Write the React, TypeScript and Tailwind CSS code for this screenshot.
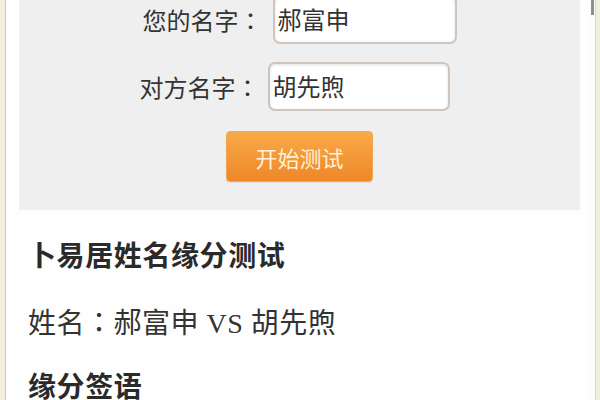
import React from "react";

const cjk = { fontFamily: '"Noto Sans CJK SC", "Noto Sans", sans-serif' };
const colon = { fontFamily: '"Noto Sans CJK JP", "Noto Sans CJK SC", sans-serif' };

export default function App() {
  return (
    <div
      className="w-[600px] h-[400px] overflow-hidden flex bg-[#f4f1e3] text-[#333333]"
      style={cjk}
    >
      <div className="w-[5px] shrink-0 bg-[#f3efdf]" />
      <div className="flex-1 flex flex-col bg-[#fefefe] border-l border-[#cfcabb] pl-[13px] pr-[10px]">
        <div className="mt-[-5px] bg-[#efefef] flex flex-col items-center pb-[28px]">
          <div className="flex items-center">
            <span className="text-[24px] leading-[30px] w-[120px] text-right">
              您的名字<span style={colon}>：</span>
            </span>
            <div className="ml-[10px] w-[184px] h-[49px] bg-white border-2 border-[#cfc5bd] rounded-[7px] shadow-[inset_0_1px_3px_rgba(0,0,0,0.12)] flex items-center pl-[3px] pb-[2px]">
              <span className="text-[24px] leading-[30px] text-[#333]">郝富申</span>
            </div>
          </div>
          <div className="flex items-center mt-[18px] pr-[10px]">
            <span className="text-[24px] leading-[30px] w-[120px] text-right">
              对方名字<span style={colon}>：</span>
            </span>
            <div className="ml-[8px] w-[182px] h-[49px] bg-white border-2 border-[#cfc5bd] rounded-[7px] shadow-[inset_0_1px_3px_rgba(0,0,0,0.12)] flex items-center pl-[3px] pb-[2px]">
              <span className="text-[24px] leading-[30px] text-[#333]">胡先煦</span>
            </div>
          </div>
          <button className="mt-[20px] w-[147px] h-[51px] rounded-[4px] border border-[#f3a656] bg-gradient-to-b from-[#f8aa48] to-[#ee8727] text-[#fff1d6] text-[22px] leading-[30px] shadow-[0_1px_1px_rgba(0,0,0,0.08)]">
            开始测试
          </button>
        </div>
        <div className="pl-[9px]">
          <div className="mt-[26px] text-[28px] leading-[36px] font-bold text-[#2a2a2a] tracking-[0.6px]">卜易居姓名缘分测试</div>
          <div
            className="mt-[31px] text-[28px] leading-[36px] tracking-[0.5px]"
            style={{ fontFamily: '"Liberation Serif", "Noto Sans CJK SC", serif' }}
          >
            <span style={cjk}>姓名</span>
            <span style={colon}>：</span>
            <span style={cjk}>郝富申</span> VS <span style={cjk}>胡先煦</span>
          </div>
          <div className="mt-[25px] text-[28px] leading-[36px] font-bold text-[#2a2a2a] tracking-[0.6px]">缘分签语</div>
        </div>
      </div>
      <div className="w-[5px] shrink-0 bg-[#fcfcf8] pl-[1px]">
        <div className="w-[3px] h-[15px] bg-[#8f8f8f]" />
      </div>
      <div className="w-[5px] shrink-0 bg-[#f3efdf] border-l border-[#dcd8c8]" />
    </div>
  );
}
